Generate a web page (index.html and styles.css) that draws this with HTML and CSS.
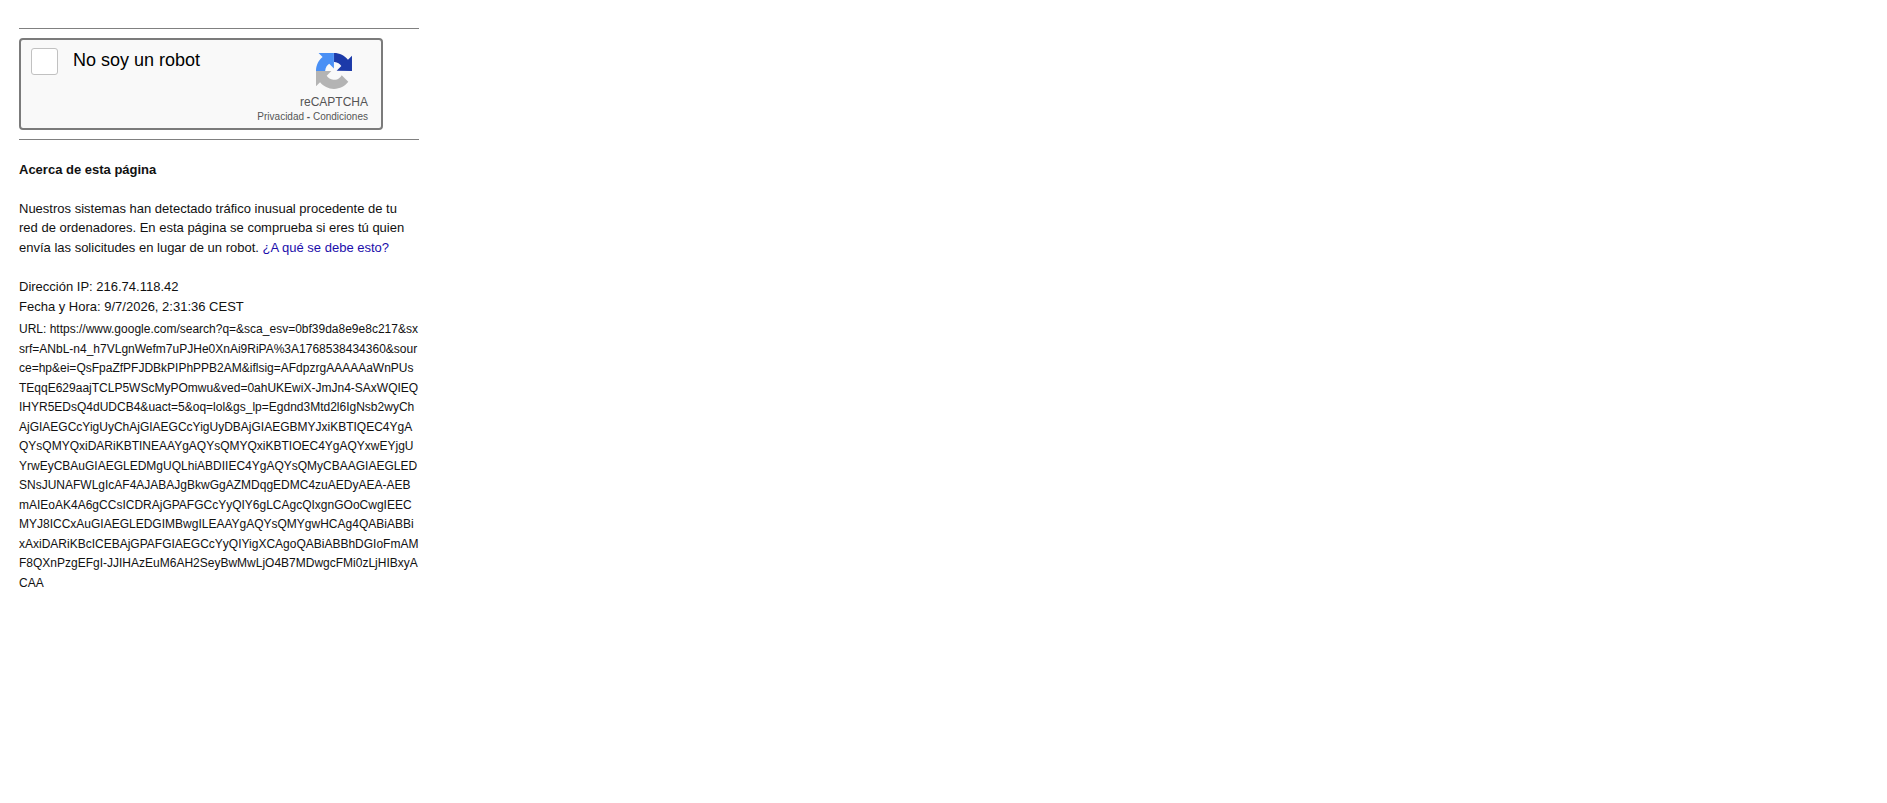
FILE: index.html
```html
<!DOCTYPE html>
<html lang="es">
<head>
<meta charset="utf-8">
<title>Acerca de esta página</title>
<link rel="stylesheet" href="styles.css">
</head>
<body>
<main class="page">
  <hr class="rule">
  <form class="captcha">
    <label class="check">
      <input class="check-box" type="checkbox">
      <span>No soy un robot</span>
    </label>
    <div class="brand">
      <svg class="brand-logo" viewBox="0 0 64 64" aria-hidden="true">
        <path fill="#1c3aa9" d="M64 31.955l-.033-1.37V4.687l-7.16 7.16C50.948 4.674 42.033.093 32.05.093v15.9l1.135.13c4.976.393 9.288 3.14 11.828 7.124l-8.307 8.307L64 31.955"/>
        <path fill="#4a90f5" d="M31.862.094l-1.37.033H4.594l7.16 7.16C4.58 13.147 0 22.06 0 32.046h16.26c0-.485.057-.86.163-1.135.393-4.976 3.14-9.288 7.124-11.828l8.307 8.307L31.862.094"/>
        <path fill="#b4b4b4" d="M.001 32.045l.033 1.37v25.898l7.16-7.16c5.86 7.173 14.774 11.754 24.76 11.754 10.4 0 19.622-4.96 25.458-12.64l-11.736-11.86a15.55 15.55 0 0 1-4.754 5.334c-2.05 1.6-4.952 2.906-8.968 2.906-.485 0-.86-.057-1.135-.163-4.976-.393-9.288-3.14-11.828-7.124l8.307-8.307c-10.522.04-22.4.066-27.295-.005"/>
      </svg>
      <span class="brand-name">reCAPTCHA</span>
      <span class="brand-links"><a href="#">Privacidad</a> <b>-</b> <a href="#">Condiciones</a></span>
    </div>
  </form>
  <hr class="rule">
  <section class="info">
    <h1 class="info-title">Acerca de esta página</h1>
    <p class="info-text">Nuestros sistemas han detectado tráfico inusual procedente de tu red de ordenadores. En esta página se comprueba si eres tú quien envía las solicitudes en lugar de un robot. <a class="why" href="#">¿A qué se debe esto?</a></p>
    <p class="info-data">Dirección IP: 216.74.118.42<br>Fecha y Hora: 9/7/2026, 2:31:36 CEST</p>
    <p class="info-url">URL: https://www.google.com/search?q=&amp;sca_esv=0bf39da8e9e8c217&amp;sx<br>srf=ANbL-n4_h7VLgnWefm7uPJHe0XnAi9RiPA%3A1768538434360&amp;sour<br>ce=hp&amp;ei=QsFpaZfPFJDBkPIPhPPB2AM&amp;iflsig=AFdpzrgAAAAAaWnPUs<br>TEqqE629aajTCLP5WScMyPOmwu&amp;ved=0ahUKEwiX-JmJn4-SAxWQIEQ<br>IHYR5EDsQ4dUDCB4&amp;uact=5&amp;oq=lol&amp;gs_lp=Egdnd3Mtd2l6IgNsb2wyCh<br>AjGIAEGCcYigUyChAjGIAEGCcYigUyDBAjGIAEGBMYJxiKBTIQEC4YgA<br>QYsQMYQxiDARiKBTINEAAYgAQYsQMYQxiKBTIOEC4YgAQYxwEYjgU<br>YrwEyCBAuGIAEGLEDMgUQLhiABDIIEC4YgAQYsQMyCBAAGIAEGLED<br>SNsJUNAFWLgIcAF4AJABAJgBkwGgAZMDqgEDMC4zuAEDyAEA-AEB<br>mAIEoAK4A6gCCsICDRAjGPAFGCcYyQIY6gLCAgcQIxgnGOoCwgIEEC<br>MYJ8ICCxAuGIAEGLEDGIMBwgILEAAYgAQYsQMYgwHCAg4QABiABBi<br>xAxiDARiKBcICEBAjGPAFGIAEGCcYyQIYigXCAgoQABiABBhDGIoFmAM<br>F8QXnPzgEFgI-JJIHAzEuM6AH2SeyBwMwLjO4B7MDwgcFMi0zLjHIBxyA<br>CAA</p>
  </section>
</main>
</body>
</html>
```
FILE: styles.css
```css
body {
  margin: 0;
  background: #fff;
  color: #111;
  font-family: Arial, "Liberation Sans", sans-serif;
  font-size: 13px;
  line-height: 1.5em;
}

.page {
  max-width: 400px;
  padding: 28px 19px 20px;
}

.rule {
  height: 1px;
  margin: 0;
  border: 0;
  background: #808080;
}

.captcha {
  display: flex;
  justify-content: space-between;
  box-sizing: border-box;
  max-width: 364px;
  margin: 9px 0;
  padding: 8px 13px 4px 10px;
  border: 2px solid #7b7b7b;
  border-radius: 4px;
  background: #f9f9f9;
}

.check {
  display: flex;
  align-items: flex-start;
  gap: 15px;
  color: #000;
  font-size: 18px;
  line-height: 24px;
}

.check-box {
  appearance: none;
  width: 27px;
  height: 27px;
  margin: 0;
  border: 1px solid #c1c1c1;
  border-radius: 3px;
  background: #fff;
}

.brand {
  display: flex;
  flex-direction: column;
  align-items: flex-end;
  padding-top: 5px;
  color: #555;
}

.brand-logo {
  width: 36px;
  height: 36px;
  margin: 0 16px 5px 0;
}

.brand-name {
  font-size: 12px;
  line-height: 16px;
}

.brand-links {
  font-size: 10px;
  line-height: 14px;
}

.brand-links a {
  color: inherit;
  text-decoration: none;
}

.info {
  padding-top: 20px;
}

.info-title {
  margin: 0 0 19px;
  font-size: 13px;
}

.info-text {
  margin: 0 0 20px;
}

.info-data {
  margin: 0 0 4px;
}

.info-url {
  margin: 0;
  font-size: 12px;
  line-height: inherit;
  white-space: nowrap;
}

.why {
  color: #1a0dab;
  text-decoration: none;
}
```
